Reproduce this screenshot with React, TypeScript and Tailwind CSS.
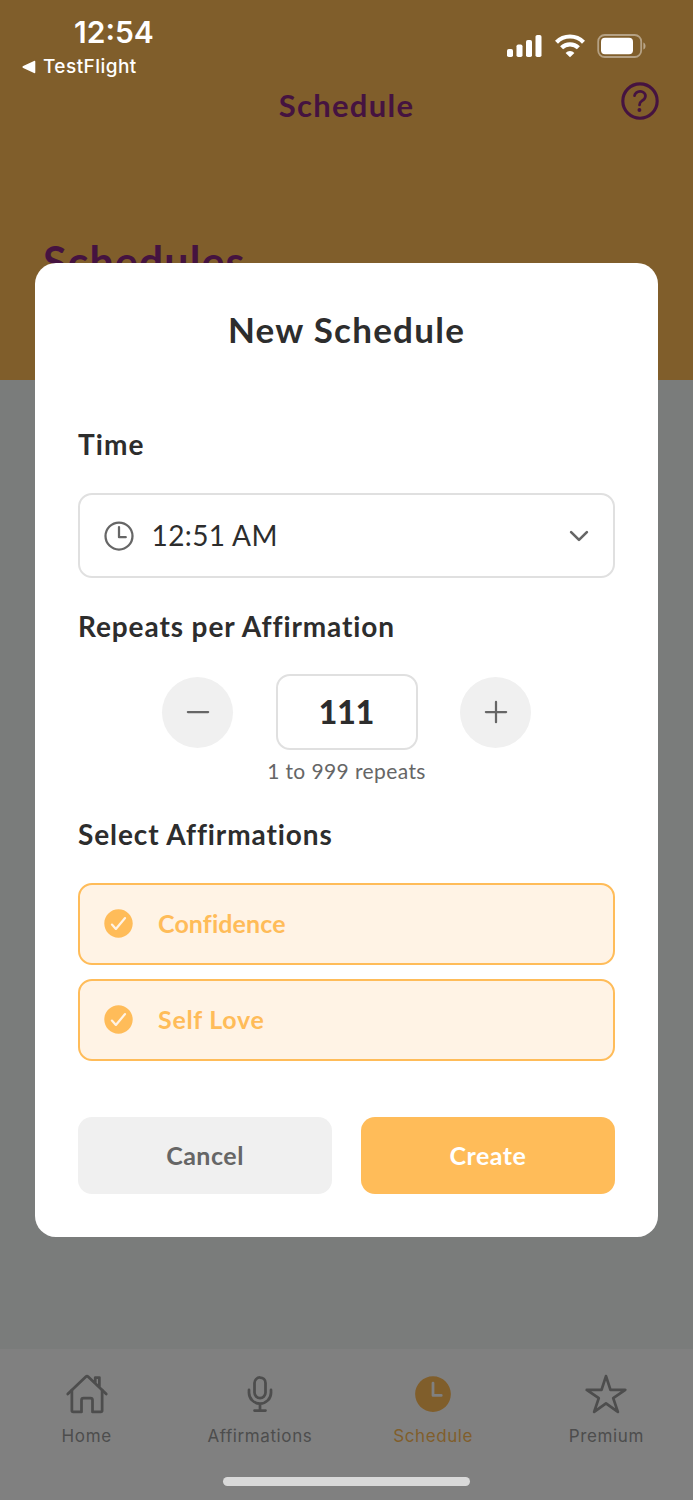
import { useState } from 'react';
import type { IconType } from 'react-icons';
import {
  IoAdd,
  IoCheckmarkCircle,
  IoChevronDown,
  IoHelpCircleOutline,
  IoHomeOutline,
  IoMicOutline,
  IoRemove,
  IoStarOutline,
  IoTime,
  IoTimeOutline,
} from 'react-icons/io5';

type Tab = { label: string; icon: IconType; active?: boolean };

const tabs: Tab[] = [
  { label: 'Home', icon: IoHomeOutline },
  { label: 'Affirmations', icon: IoMicOutline },
  { label: 'Schedule', icon: IoTime, active: true },
  { label: 'Premium', icon: IoStarOutline },
];

const affirmations = [
  { name: 'Confidence', className: 'tracking-[0.1px]' },
  { name: 'Self Love', className: 'tracking-[0.7px]' },
];

const StatusBar = () => (
  <div className="flex h-[80px] justify-between font-['Inter'] text-white">
    <div className="pt-[14px] pl-[22px]">
      <p className="pl-[52px] text-[30px] leading-9 font-semibold">12:54</p>
      <p className="mt-px flex items-center gap-[7px] text-[19px] leading-8 font-medium tracking-[0.45px]">
        <svg width="14" height="14" viewBox="0 0 14 14" fill="currentColor">
          <path d="M1.2 6.1 12 1q1.3-.5 1.3.8v10.4q0 1.3-1.3.8L1.2 7.9q-1.6-.9 0-1.8z" />
        </svg>
        TestFlight
      </p>
    </div>
    <div className="mt-[34px] mr-[46px] flex h-6 items-center gap-3">
      <svg width="36" height="24" viewBox="0 0 36 24" fill="currentColor">
        <rect x="0" y="15" width="6" height="8" rx="1.8" />
        <rect x="9.5" y="10.5" width="6" height="12.5" rx="1.8" />
        <rect x="19" y="6" width="6" height="17" rx="1.8" />
        <rect x="28.5" y="1" width="6" height="22" rx="1.8" />
      </svg>
      <svg width="30" height="24" viewBox="0 0 30 24" fill="none" stroke="currentColor">
        <path d="M1.5 8.2a18.8 18.8 0 0 1 27 0" strokeWidth="4.2" />
        <path d="M6.6 13.8a11.8 11.8 0 0 1 16.8 0" strokeWidth="4.2" />
        <path d="M15 23.2 10.6 18.9a6.3 6.3 0 0 1 8.8 0z" fill="currentColor" stroke="none" />
      </svg>
      <svg width="50" height="24" viewBox="0 0 50 24" fill="none">
        <rect x="1.2" y="1" width="43" height="22" rx="6.5" stroke="white" strokeOpacity=".42" strokeWidth="1.8" />
        <rect x="4" y="3.8" width="32" height="16.4" rx="4" fill="white" />
        <path d="M46.4 8.4c2.8 1.2 2.8 6 0 7.2z" fill="white" fillOpacity=".45" />
      </svg>
    </div>
  </div>
);

const TabBar = () => (
  <div className="h-[151px] bg-[#808080] font-['Inter']">
    <div className="grid h-[104px] grid-cols-4 pt-[23px]">
      {tabs.map(({ label, icon: Icon, active }) => (
        <div
          key={label}
          className={`flex flex-col items-center ${active ? 'text-[#805e2b]' : 'text-[#4d4d4d]'}`}
        >
          <Icon size={44} />
          <span className="mt-[8px] text-[17px] leading-6 tracking-[0.6px]">{label}</span>
        </div>
      ))}
    </div>
    <div className="mx-auto mt-[23.5px] h-[9px] w-[247px] rounded-full bg-[#d9d9d9]" />
  </div>
);

const ScheduleModal = () => {
  const [repeats, setRepeats] = useState(111);

  return (
    <div className="h-[974px] w-[623px] rounded-[21px] bg-white px-[43px] text-[#2d2d2d]">
      <h2 className="mt-[44px] text-center text-[35px] leading-[44px] font-bold tracking-[1.25px]">New Schedule</h2>

      <h3 className="mt-[75px] text-[28px] leading-9 font-bold tracking-[1.1px]">Time</h3>
      <button className="mt-[31px] flex h-[85px] w-full items-center rounded-[14px] border-2 border-[#e0e0e0] pr-[20.5px] pl-[20.5px]">
        <IoTimeOutline size={36} className="text-[#666]" />
        <span className="mb-[2px] ml-[15px] text-[28px] leading-9 tracking-[0.4px]">12:51 AM</span>
        <IoChevronDown size={28} className="ml-auto text-[#666]" />
      </button>

      <h3 className="mt-[30px] text-[28px] leading-9 font-bold tracking-[0.9px]">Repeats per Affirmation</h3>
      <div className="mt-[30px] flex items-center justify-center gap-[42.5px]">
        <button
          className="flex size-[71px] items-center justify-center rounded-full bg-[#f0f0f0] text-[#666]"
          onClick={() => setRepeats(Math.max(1, repeats - 1))}
        >
          <IoRemove size={36} />
        </button>
        <div className="flex h-[76px] w-[142px] items-center justify-center rounded-[14px] border-2 border-[#e0e0e0] text-[32px] font-black">
          {repeats}
        </div>
        <button
          className="flex size-[71px] items-center justify-center rounded-full bg-[#f0f0f0] text-[#666]"
          onClick={() => setRepeats(Math.min(999, repeats + 1))}
        >
          <IoAdd size={36} />
        </button>
      </div>
      <p className="mt-[7px] text-center text-[21px] leading-7 tracking-[0.4px] text-[#666]">1 to 999 repeats</p>

      <h3 className="mt-[31px] text-[28px] leading-9 font-bold tracking-[0.9px]">Select Affirmations</h3>
      <div className="mt-[30.5px] flex flex-col gap-[14px]">
        {affirmations.map(({ name, className }) => (
          <div
            key={name}
            className="flex h-[82px] items-center rounded-[14px] border-2 border-[#ffbc59] bg-[#fff3e5] px-[21px] text-[#ffbc59]"
          >
            <IoCheckmarkCircle size={35} className="mb-px" />
            <span className={`mb-[2px] ml-[22px] text-[25px] leading-8 font-bold ${className}`}>{name}</span>
          </div>
        ))}
      </div>

      <div className="mt-[56.5px] grid grid-cols-2 gap-[29px] text-[25px] font-bold tracking-[0.5px]">
        <button className="h-[77px] rounded-[14px] bg-[#f0f0f0] text-[#666]">Cancel</button>
        <button className="h-[77px] rounded-[14px] bg-[#ffbc59] text-white">Create</button>
      </div>
    </div>
  );
};

export default function App() {
  return (
    <div className="relative flex h-[1500px] w-[693px] flex-col overflow-hidden bg-[#7a7c7b] font-['Lato',sans-serif]">
      <header className="h-[380px] bg-[#805e2b] text-[#451340]">
        <StatusBar />
        <div className="grid grid-cols-[1fr_auto_1fr] grid-rows-[42px] items-center">
          <h1 className="col-start-2 mt-[8px] text-[31px] leading-10 font-bold tracking-[1.3px]">Schedule</h1>
          <IoHelpCircleOutline size={50} className="mr-[28px] justify-self-end" />
        </div>
        <h2 className="mt-[114px] pl-[43px] text-[43px] leading-[52px] font-bold tracking-[1.1px]">Schedules</h2>
      </header>
      <main className="flex-1" />
      <TabBar />
      <div className="absolute inset-0 flex items-center justify-center">
        <ScheduleModal />
      </div>
    </div>
  );
}
